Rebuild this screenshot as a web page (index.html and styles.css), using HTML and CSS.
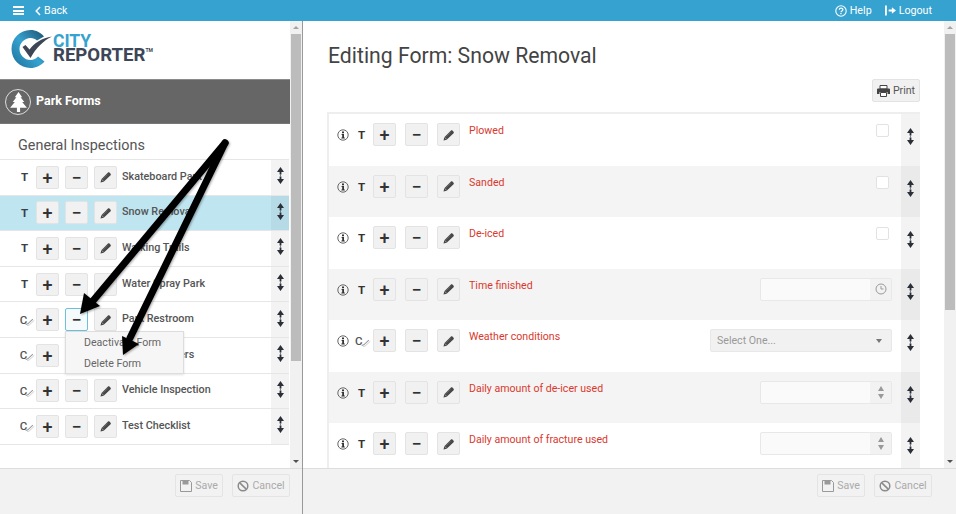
FILE: index.html
```html
<!DOCTYPE html>
<html lang="en">
<head>
<meta charset="utf-8">
<title>Editing Form: Snow Removal</title>
<link rel="stylesheet" href="styles.css">
</head>
<body>
<svg class="defs" width="0" height="0" aria-hidden="true">
  <symbol id="i-pencil" viewBox="0 0 12 12"><path d="M.5 11.500l.8-3.200 6.700-6.700c.4-.4 1-.4 1.400 0l1.200 1.200c.4.4.4 1 0 1.400L3.700 10.700z" fill="#474747"/><path d="M1.600 8.300l2.100 2.100" stroke="#c8c8c8" stroke-width=".7"/><path d="M2.900 7.900l4.500-4.500" stroke="#8a8a8a" stroke-width=".5"/></symbol>
  <symbol id="i-sort" viewBox="0 0 7 17"><path d="M3.500 0L7 5H4.400V7.500H2.600V5H0zM3.500 17L0 12H2.600V9.500H4.400V12H7z" fill="#2b2f38"/><path d="M3.100 7.500h.8v2h-.8z" fill="#5a5e68"/></symbol>
  <symbol id="i-info" viewBox="0 0 12 12"><circle cx="6" cy="6" r="5.200" fill="none" stroke="#666" stroke-width="1"/><path d="M5 2.600h2v1.600H5zM4.600 5h2.400v3.600h.8V9.600H4.400V8.600h.8V6H4.600z" fill="#333"/></symbol>
  <symbol id="i-check" viewBox="0 0 14 14"><path d="M1 12l3-1 7-6.500" fill="none" stroke="#999" stroke-width="1.500"/><path d="M3 13.500l3-1 7-6.500" fill="none" stroke="#bbb" stroke-width="1"/></symbol>
  <symbol id="i-save" viewBox="0 0 12 12"><path d="M.5.500h9l2 2v9H.5z" fill="#f2f2f2" stroke="#999"/><path d="M2.500.500h6v4h-6z" fill="#999"/></symbol>
  <symbol id="i-cancel" viewBox="0 0 12 12"><circle cx="6" cy="6" r="4.800" fill="none" stroke="#8a8a8a" stroke-width="1.500"/><path d="M2.600 2.600l6.800 6.800" stroke="#8a8a8a" stroke-width="1.500"/></symbol>
</svg>

<header class="topbar">
  <div class="top-left">
    <span class="burger"><i></i><i></i><i></i></span>
    <span class="back"><svg width="6" height="10" viewBox="0 0 6 10"><path d="M5 1L1.200 5 5 9" fill="none" stroke="#fff" stroke-width="1.500"/></svg>Back</span>
  </div>
  <div class="top-right">
    <span class="top-link"><svg width="12" height="12" viewBox="0 0 12 12"><circle cx="6" cy="6" r="5.200" fill="none" stroke="#fff" stroke-width="1.100"/><path d="M4.300 4.700c0-2.200 3.600-2.200 3.600-.1 0 1.300-1.900 1.400-1.900 2.600" fill="none" stroke="#fff" stroke-width="1.200"/><path d="M5.300 8h1.300v1.300H5.300z" fill="#fff"/></svg>Help</span>
    <span class="top-link"><svg width="11" height="11" viewBox="0 0 12 11"><path d="M0 0h2v11H0z" fill="#fff"/><path d="M4 4.500h3.500V2L12 5.500 7.500 9V6.500H4z" fill="#fff"/></svg>Logout</span>
  </div>
</header>

<main class="app">
  <section class="pane pane-left">
    <div class="pane-body">
      <div class="pane-scroll">
        <div class="logo">
          <svg class="logo-mark" width="42" height="38" viewBox="0 0 42 38">
            <defs><linearGradient id="lg" x1="0" y1="1" x2="1" y2="0"><stop offset="0" stop-color="#1d6f98"/><stop offset=".5" stop-color="#35a2d0"/><stop offset="1" stop-color="#1f4f6e"/></linearGradient></defs>
            <path d="M33 6.500C29.500 2.500 25 0 19.500 0 9 0 .5 8.500.5 19s8.500 19 19 19c5.500 0 10.500-2.500 14-6.500l-6.500-5c-2 2-4.500 3.500-7.500 3.500-6 0-11-5-11-11s5-11 11-11c2.500 0 5 1 6.500 2.500z" fill="url(#lg)"/>
            <path d="M11.500 17l3-2 4 4.500C23 13 31 8 41 6.500 32 11 25 18 19.500 28z" fill="#3c4656"/>
          </svg>
          <div class="logo-text">
            <span class="logo-city">CITY</span>
            <span class="logo-reporter">REPORTER<sup>TM</sup></span>
          </div>
        </div>
        <div class="band">
          <span class="band-icon"><svg width="17" height="20" viewBox="0 0 16 19"><path d="M8 0l3.500 5H10l3.500 4.500h-2L16 15H9.500v4h-3v-4H0l4.500-5.500h-2L6 5H4.500z" fill="#fff"/></svg></span>
          <strong>Park Forms</strong>
        </div>
        <h2 class="group-title">General Inspections</h2>
        <div class="form-list">
          <div class="form-row"><span class="type">T</span><button class="sq">+</button><button class="sq minus">−</button><button class="sq"><svg width="12" height="12"><use href="#i-pencil"/></svg></button><span class="form-name">Skateboard Park</span><span class="sort"><svg width="7" height="17"><use href="#i-sort"/></svg></span></div>
          <div class="form-row selected"><span class="type">T</span><button class="sq">+</button><button class="sq minus">−</button><button class="sq"><svg width="12" height="12"><use href="#i-pencil"/></svg></button><span class="form-name">Snow Removal</span><span class="sort"><svg width="7" height="17"><use href="#i-sort"/></svg></span></div>
          <div class="form-row"><span class="type">T</span><button class="sq">+</button><button class="sq minus">−</button><button class="sq"><svg width="12" height="12"><use href="#i-pencil"/></svg></button><span class="form-name">Walking Trails</span><span class="sort"><svg width="7" height="17"><use href="#i-sort"/></svg></span></div>
          <div class="form-row"><span class="type">T</span><button class="sq">+</button><button class="sq minus">−</button><button class="sq"><svg width="12" height="12"><use href="#i-pencil"/></svg></button><span class="form-name">Water Spray Park</span><span class="sort"><svg width="7" height="17"><use href="#i-sort"/></svg></span></div>
          <div class="form-row"><span class="type type-c">C<svg width="10" height="10"><use href="#i-check"/></svg></span><button class="sq">+</button><button class="sq minus focus">−</button><button class="sq"><svg width="12" height="12"><use href="#i-pencil"/></svg></button><span class="form-name">Park Restroom</span><span class="sort"><svg width="7" height="17"><use href="#i-sort"/></svg></span></div>
          <div class="form-row"><span class="type type-c">C<svg width="10" height="10"><use href="#i-check"/></svg></span><button class="sq">+</button><button class="sq minus">−</button><button class="sq"><svg width="12" height="12"><use href="#i-pencil"/></svg></button><span class="form-name">Picnic Shelters</span><span class="sort"><svg width="7" height="17"><use href="#i-sort"/></svg></span></div>
          <div class="form-row"><span class="type type-c">C<svg width="10" height="10"><use href="#i-check"/></svg></span><button class="sq">+</button><button class="sq minus">−</button><button class="sq"><svg width="12" height="12"><use href="#i-pencil"/></svg></button><span class="form-name">Vehicle Inspection</span><span class="sort"><svg width="7" height="17"><use href="#i-sort"/></svg></span></div>
          <div class="form-row"><span class="type type-c">C<svg width="10" height="10"><use href="#i-check"/></svg></span><button class="sq">+</button><button class="sq minus">−</button><button class="sq"><svg width="12" height="12"><use href="#i-pencil"/></svg></button><span class="form-name">Test Checklist</span><span class="sort"><svg width="7" height="17"><use href="#i-sort"/></svg></span></div>
        </div>
      </div>
      <div class="scrollbar"><span class="sb-up"></span><span class="sb-thumb left-thumb"></span><span class="sb-space"></span><span class="sb-down"></span></div>
    </div>
    <footer class="pane-foot foot-left">
      <button class="foot-btn btn-save"><svg width="12" height="12"><use href="#i-save"/></svg>Save</button>
      <button class="foot-btn btn-cancel"><svg width="12" height="12"><use href="#i-cancel"/></svg>Cancel</button>
    </footer>
  </section>

  <section class="pane pane-right">
    <div class="pane-body">
      <div class="pane-scroll detail">
        <h1 class="page-title">Editing Form: Snow Removal</h1>
        <div class="print-line"><button class="print-btn"><svg width="13" height="12" viewBox="0 0 13 12"><path d="M3 .500h7v3.500H3z" fill="#fff" stroke="#444"/><path d="M0 4.500a1 1 0 0 1 1-1h11a1 1 0 0 1 1 1V9h-2.500V7h-8v2H0z" fill="#444"/><path d="M3.500 7.500h6v4h-6z" fill="#fff" stroke="#444"/></svg>Print</button></div>
        <div class="field-table">
          <div class="field-row"><svg class="info" width="12" height="12"><use href="#i-info"/></svg><span class="ftype">T</span><button class="sq">+</button><button class="sq">−</button><button class="sq"><svg width="12" height="12"><use href="#i-pencil"/></svg></button><span class="field-label">Plowed</span><span class="checkbox"></span><span class="sort"><svg width="7" height="17"><use href="#i-sort"/></svg></span></div>
          <div class="field-row"><svg class="info" width="12" height="12"><use href="#i-info"/></svg><span class="ftype">T</span><button class="sq">+</button><button class="sq">−</button><button class="sq"><svg width="12" height="12"><use href="#i-pencil"/></svg></button><span class="field-label">Sanded</span><span class="checkbox"></span><span class="sort"><svg width="7" height="17"><use href="#i-sort"/></svg></span></div>
          <div class="field-row"><svg class="info" width="12" height="12"><use href="#i-info"/></svg><span class="ftype">T</span><button class="sq">+</button><button class="sq">−</button><button class="sq"><svg width="12" height="12"><use href="#i-pencil"/></svg></button><span class="field-label">De-iced</span><span class="checkbox"></span><span class="sort"><svg width="7" height="17"><use href="#i-sort"/></svg></span></div>
          <div class="field-row"><svg class="info" width="12" height="12"><use href="#i-info"/></svg><span class="ftype">T</span><button class="sq">+</button><button class="sq">−</button><button class="sq"><svg width="12" height="12"><use href="#i-pencil"/></svg></button><span class="field-label">Time finished</span><span class="addon-input"><span class="input-box"></span><span class="addon"><svg width="12" height="12" viewBox="0 0 12 12"><circle cx="6" cy="6" r="5" fill="none" stroke="#999"/><path d="M6 3v3h2.500" fill="none" stroke="#999"/></svg></span></span><span class="sort"><svg width="7" height="17"><use href="#i-sort"/></svg></span></div>
          <div class="field-row"><svg class="info" width="12" height="12"><use href="#i-info"/></svg><span class="ftype ftype-c">C<svg width="10" height="10"><use href="#i-check"/></svg></span><button class="sq">+</button><button class="sq">−</button><button class="sq"><svg width="12" height="12"><use href="#i-pencil"/></svg></button><span class="field-label">Weather conditions</span><span class="select-box"><span>Select One...</span><i class="caret"></i></span><span class="sort"><svg width="7" height="17"><use href="#i-sort"/></svg></span></div>
          <div class="field-row"><svg class="info" width="12" height="12"><use href="#i-info"/></svg><span class="ftype">T</span><button class="sq">+</button><button class="sq">−</button><button class="sq"><svg width="12" height="12"><use href="#i-pencil"/></svg></button><span class="field-label">Daily amount of de-icer used</span><span class="addon-input"><span class="input-box"></span><span class="addon spin"><i class="up"></i><i class="down"></i></span></span><span class="sort"><svg width="7" height="17"><use href="#i-sort"/></svg></span></div>
          <div class="field-row"><svg class="info" width="12" height="12"><use href="#i-info"/></svg><span class="ftype">T</span><button class="sq">+</button><button class="sq">−</button><button class="sq"><svg width="12" height="12"><use href="#i-pencil"/></svg></button><span class="field-label">Daily amount of fracture used</span><span class="addon-input"><span class="input-box"></span><span class="addon spin"><i class="up"></i><i class="down"></i></span></span><span class="sort"><svg width="7" height="17"><use href="#i-sort"/></svg></span></div>
        </div>
      </div>
      <div class="scrollbar"><span class="sb-up"></span><span class="sb-thumb right-thumb"></span><span class="sb-space"></span><span class="sb-down"></span></div>
    </div>
    <footer class="pane-foot foot-right">
      <button class="foot-btn btn-save"><svg width="12" height="12"><use href="#i-save"/></svg>Save</button>
      <button class="foot-btn btn-cancel"><svg width="12" height="12"><use href="#i-cancel"/></svg>Cancel</button>
    </footer>
  </section>

  <div class="menu">
    <span>Deactivate Form</span>
    <span>Delete Form</span>
  </div>

  <svg class="arrows" width="956" height="514" viewBox="0 0 956 514" aria-hidden="true">
    <defs><filter id="ds" x="-20%" y="-20%" width="140%" height="140%"><feDropShadow dx="1" dy="1" stdDeviation="1" flood-color="#000" flood-opacity=".35"/></filter></defs>
    <g filter="url(#ds)">
      <path d="M225 143L92 302" stroke="#000" stroke-width="7" stroke-linecap="round" fill="none"/>
      <path d="M80 314L84 293 100 306z" fill="#000"/>
      <path d="M225 143L130 338" stroke="#000" stroke-width="7" stroke-linecap="round" fill="none"/>
      <path d="M123 355L122 336 139 344z" fill="#000"/>
    </g>
  </svg>
</main>
</body>
</html>
```
FILE: styles.css
```css
* { box-sizing: border-box; }
html, body { margin: 0; height: 100%; }
body { width: 956px; height: 514px; overflow: hidden; font-family: Roboto, "Liberation Sans", sans-serif; background: #fff; color: #555; position: relative; }
button { font-family: inherit; padding: 0; }
.defs { position: absolute; }

.topbar { height: 21px; background: #35a2d0; color: #fff; display: flex; justify-content: space-between; align-items: center; font-size: 10.700px; }
.top-left { display: flex; align-items: center; padding-left: 13px; }
.burger { display: flex; flex-direction: column; gap: 1.500px; width: 11px; }
.burger i { display: block; height: 2px; background: #fff; }
.back { display: flex; align-items: center; gap: 3px; margin-left: 11px; }
.top-right { display: flex; align-items: center; gap: 13px; padding-right: 24px; }
.top-link { display: flex; align-items: center; gap: 3px; }

.app { display: flex; height: 493px; position: relative; }
.pane { display: flex; flex-direction: column; height: 100%; }
.pane-left { width: 303px; border-right: 1px solid #999; }
.pane-right { flex: 1; min-width: 0; }
.pane-body { flex: 1; display: flex; min-height: 0; }
.pane-scroll { flex: 1; min-width: 0; overflow: hidden; }
.pane-foot { height: 46px; background: #f2f2f2; border-top: 1px solid #ddd; display: flex; justify-content: flex-end; gap: 9px; padding-top: 5px; }
.foot-left { padding-right: 12px; }
.foot-right { padding-right: 24px; }
.foot-btn { height: 23px; display: flex; align-items: center; justify-content: center; gap: 3px; font-size: 10.600px; color: #aaa; background: #f2f2f2; border: 1px solid #e4e4e4; border-radius: 2px; }
.btn-save { width: 48px; }
.btn-cancel { width: 58px; }
.foot-btn svg { flex: none; }

.scrollbar { width: 12px; flex: none; background: #f1f1f1; display: flex; flex-direction: column; align-items: center; }
.sb-up { height: 13px; flex: none; width: 100%; position: relative; }
.sb-up::after { content: ""; position: absolute; left: 3px; top: 5px; border: 3px solid transparent; border-top: 0; border-bottom: 3px solid #a3a3a3; }
.sb-down { height: 13px; flex: none; width: 100%; position: relative; }
.sb-down::after { content: ""; position: absolute; left: 3px; top: 5px; border: 3px solid transparent; border-bottom: 0; border-top: 3px solid #505050; }
.sb-thumb { width: 10px; background: #bcbcbc; flex: none; }
.left-thumb { height: 327px; }
.right-thumb { height: 276px; }
.sb-space { flex: 1; }

.logo { height: 58px; display: flex; align-items: flex-start; padding: 9px 0 0 11px; }
.logo-mark { flex: none; }
.logo-text { display: flex; flex-direction: column; margin: 5px 0 0 0; line-height: 1; font-weight: 700; }
.logo-city { font-size: 17.500px; height: 13px; line-height: 13px; color: #35a2d0; }
.logo-reporter { font-size: 18.600px; height: 15px; line-height: 15px; color: #3c4656; }
.logo-reporter sup { font-size: 5px; vertical-align: 9px; line-height: 0; }

.band { height: 45px; background: #666; border-top: 1px solid #8a8a8a; border-bottom: 1px solid #777; display: flex; align-items: center; padding-left: 5px; color: #fff; font-size: 12.500px; }
.band strong { font-weight: 700; margin: -2px 0 0 5px; }
.band-icon { width: 26px; height: 26px; border: 1px solid #ddd; border-radius: 50%; display: flex; align-items: center; justify-content: center; }

.group-title { margin: 0; height: 35px; padding: 13px 0 0 18px; font-size: 14.400px; line-height: 18px; font-weight: 400; color: #555; }
.form-list { border-top: 1px solid #e6e6e6; margin-right: 1px; }
.form-row { height: 35.600px; display: flex; align-items: center; border-bottom: 1px solid #e6e6e6; padding-left: 7px; }
.form-row.selected { background: #bfe5f1; }
.type { width: 29px; text-align: center; font-size: 11.500px; font-weight: 700; color: #3a3f48; display: flex; justify-content: center; padding-left: 6px; }
.type-c { font-weight: 500; color: #555; }
.type-c svg, .ftype-c svg { margin: 3px -6px 0 -2px; }
.sq { width: 23px; height: 23px; flex: none; margin-right: 6px; background: #f1f1f1; border: 1px solid #e3e3e3; border-radius: 2px; font-size: 18px; line-height: 19px; font-weight: 500; color: #333; display: flex; align-items: center; justify-content: center; }
.sq.focus { border-color: #6ebfd9; background: #f5fbfd; }
.form-name { flex: 1; margin: -2px 0 0 -1px; font-size: 10.800px; font-weight: 500; color: #555; white-space: nowrap; overflow: hidden; }
.sort { width: 18px; align-self: stretch; background: #f3f3f3; flex: none; display: flex; align-items: center; justify-content: center; padding-bottom: 3px; }
.selected .sort { background: #b6dbe6; }

.detail { padding: 0 24px; }
.page-title { margin: 0; padding: 22px 0 0 1px; height: 58px; font-size: 21.200px; line-height: 26px; font-weight: 400; color: #444; }
.print-line { display: flex; justify-content: flex-end; height: 33px; }
.print-btn { width: 48px; height: 23px; display: flex; align-items: center; justify-content: center; gap: 3px; font-size: 10.600px; color: #555; background: #f1f1f1; border: 1px solid #e3e3e3; border-radius: 2px; }

.field-table { border-top: 2px solid #eee; border-left: 2px solid #eee; }
.field-row { height: 51.500px; display: flex; align-items: flex-start; padding: 9px 0 0 8px; }
.field-row:nth-child(even) { background: #f4f4f4; }
.info { margin-top: 6px; flex: none; }
.ftype { width: 13px; margin: 5px 5px 0 6px; font-size: 11.500px; font-weight: 700; color: #333; text-align: center; line-height: 14px; flex: none; white-space: nowrap; }
.ftype-c { font-weight: 500; color: #555; display: flex; }
.field-row .sq { margin-right: 9px; }
.field-label { flex: 1; font-size: 10.600px; line-height: 15px; color: #d9382e; white-space: nowrap; }
.field-row .sort { margin-top: -9px; width: 19px; height: 51.500px; padding: 14px 0 0; align-items: flex-start; align-self: flex-start; flex: none; }
.field-row:nth-child(even) .sort { background: #eaeaea; }
.checkbox { width: 13px; height: 13px; margin: 1px 12px 0 0; background: #fff; border: 1px solid #e2e2e2; border-radius: 2px; flex: none; }
.addon-input { width: 132px; height: 23px; margin-right: 9px; display: flex; flex: none; border: 1px solid #e8e8e8; border-radius: 2px; background: #fafafa; }
.input-box { flex: 1; }
.addon { width: 21px; background: #f2f2f2; flex: none; display: flex; align-items: center; justify-content: center; }
.spin { flex-direction: column; gap: 3px; }
.up { border: 3.500px solid transparent; border-top: 0; border-bottom: 5px solid #999; }
.down { border: 3.500px solid transparent; border-bottom: 0; border-top: 5px solid #999; }
.select-box { width: 182px; height: 23px; margin-right: 9px; flex: none; display: flex; align-items: center; justify-content: space-between; padding: 0 9px 0 6px; background: #f1f1f1; border: 1px solid #e8e8e8; border-radius: 2px; font-size: 10.600px; color: #999; }
.caret { border: 3px solid transparent; border-bottom: 0; border-top: 4px solid #777; }

.menu { position: absolute; left: 65px; top: 310px; width: 119px; height: 43px; background: #f6f6f6; border: 1px solid #ddd; box-shadow: 0 1px 2px rgba(0,0,0,.12); display: flex; flex-direction: column; padding: 0 0 0 18px; font-size: 10.600px; line-height: 21px; color: #666; }
.arrows { position: absolute; left: 0; top: -21px; pointer-events: none; }
```
